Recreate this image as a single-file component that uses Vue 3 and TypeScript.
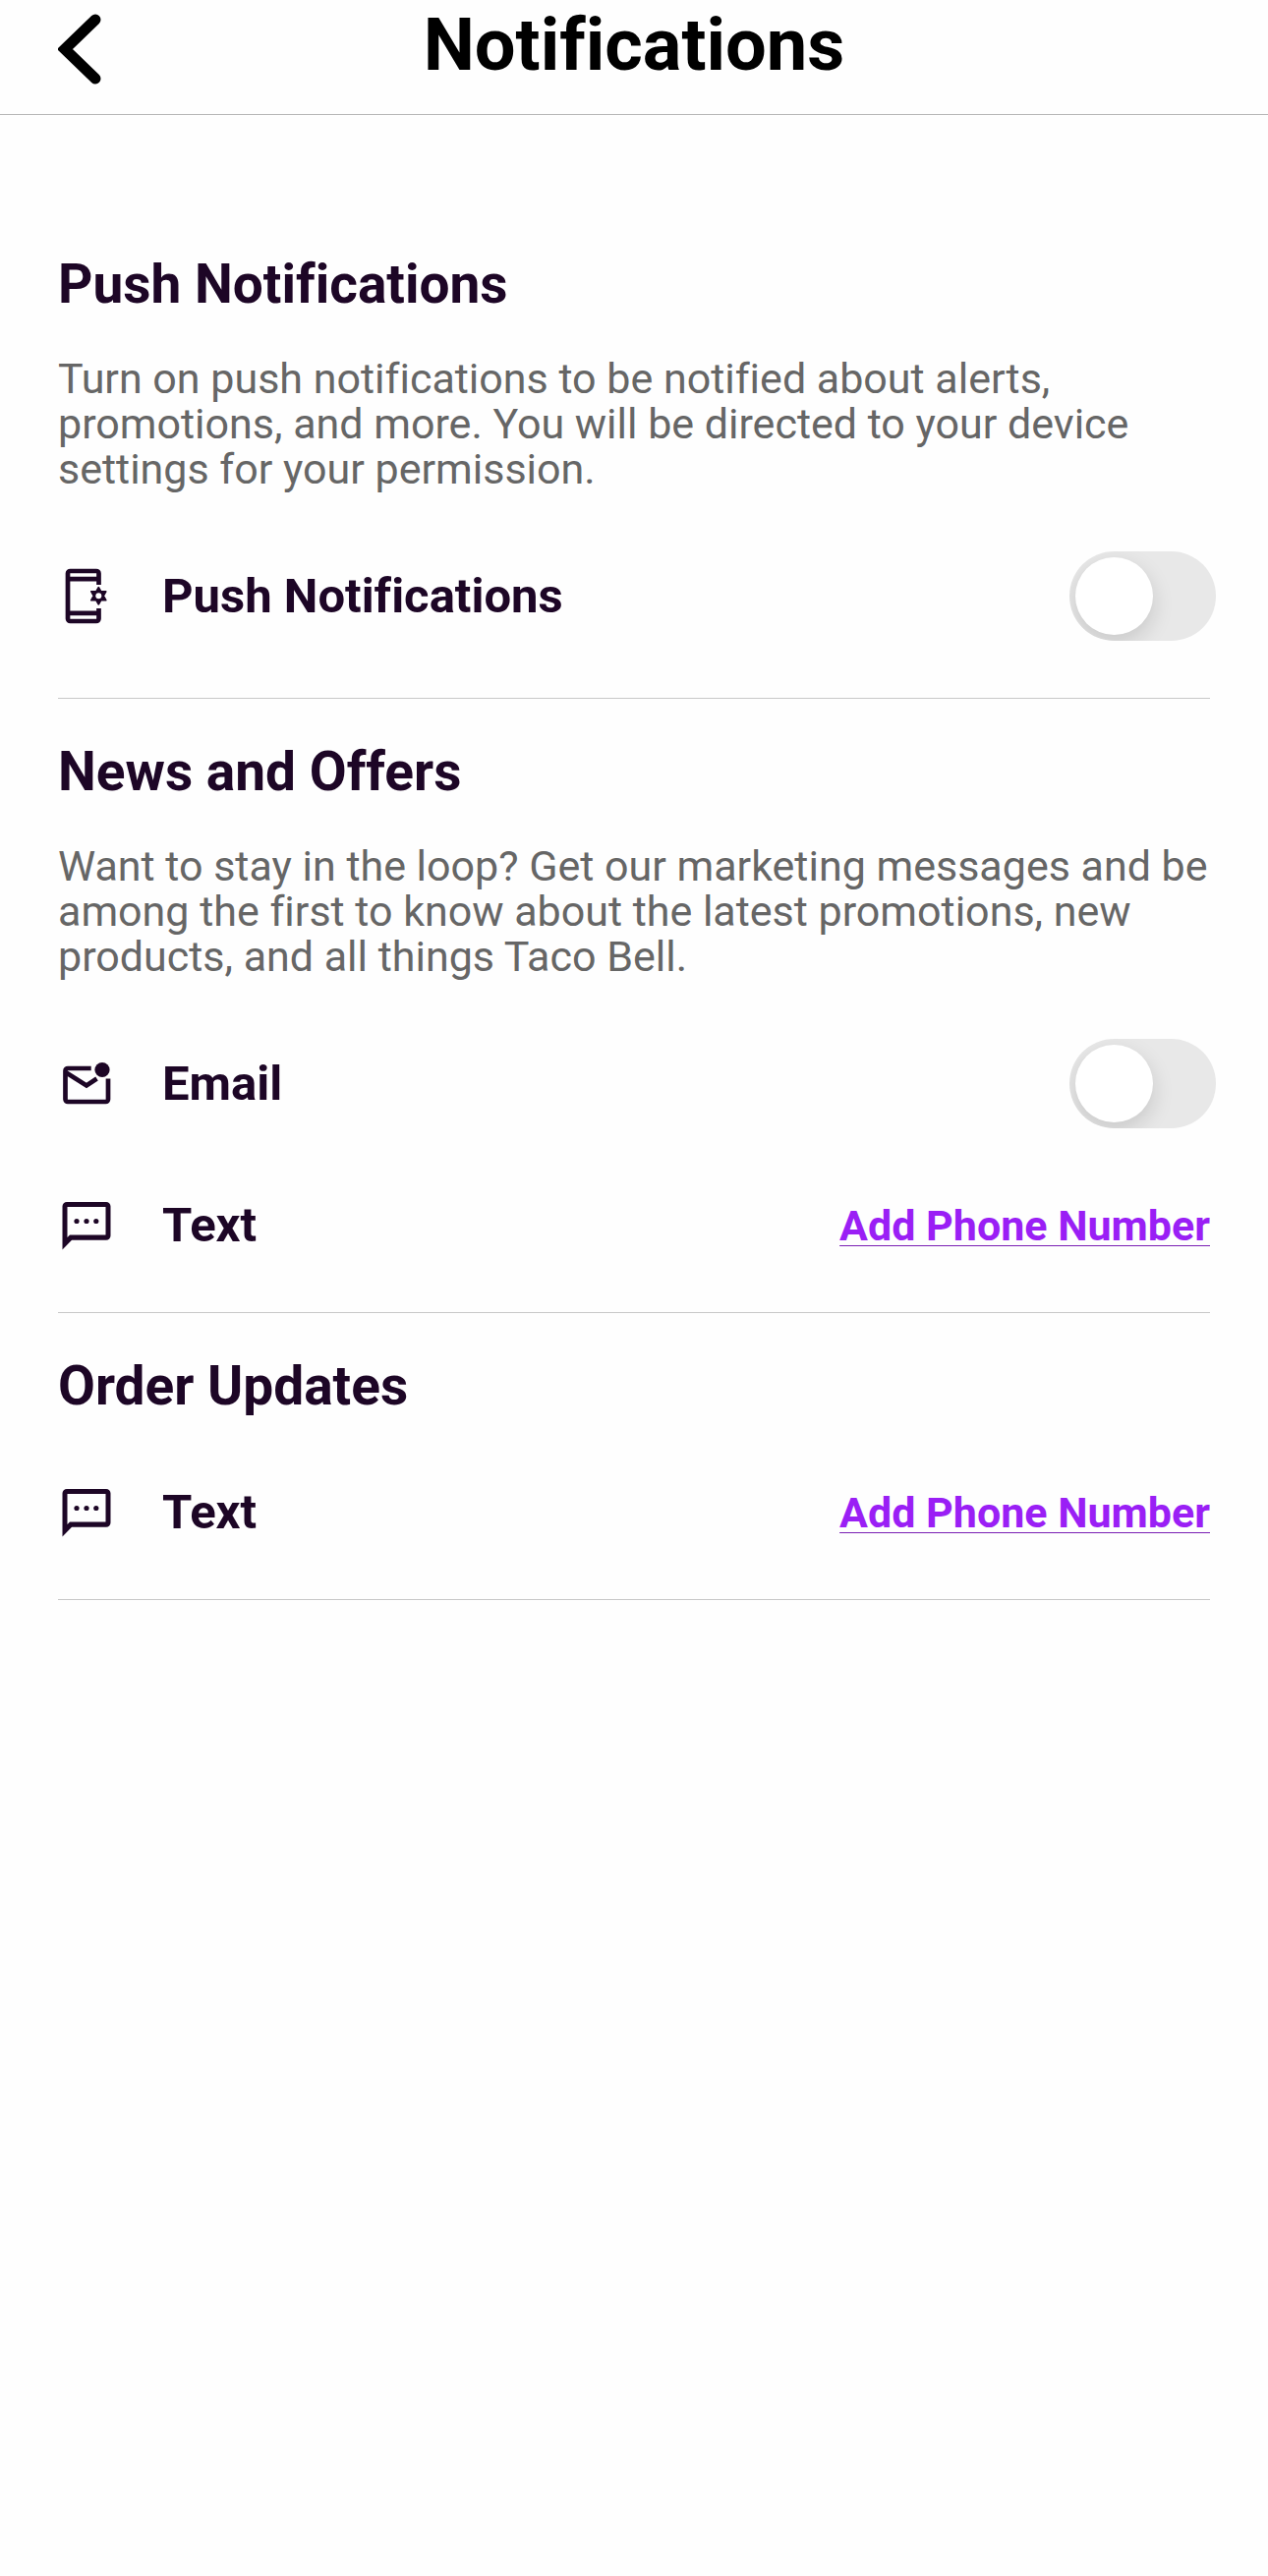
<script setup lang="ts">
import { ref } from 'vue'

type IconName = 'phone' | 'email' | 'text'

interface Channel {
  id: string
  label: string
  icon: IconName
  kind: 'toggle' | 'link'
}

interface Section {
  title: string
  description?: string
  channels: Channel[]
}

const sections: Section[] = [
  {
    title: 'Push Notifications',
    description:
      'Turn on push notifications to be notified about alerts, promotions, and more. You will be directed to your device settings for your permission.',
    channels: [{ id: 'push', label: 'Push Notifications', icon: 'phone', kind: 'toggle' }],
  },
  {
    title: 'News and Offers',
    description:
      'Want to stay in the loop? Get our marketing messages and be among the first to know about the latest promotions, new products, and all things Taco Bell.',
    channels: [
      { id: 'news-email', label: 'Email', icon: 'email', kind: 'toggle' },
      { id: 'news-text', label: 'Text', icon: 'text', kind: 'link' },
    ],
  },
  {
    title: 'Order Updates',
    channels: [{ id: 'order-text', label: 'Text', icon: 'text', kind: 'link' }],
  },
]

const enabled = ref<Record<string, boolean>>({ push: false, 'news-email': false })
</script>

<template>
  <div class="page">
    <header class="header">
      <button class="back" type="button" aria-label="Back">
        <svg width="44" height="72" viewBox="0 0 44 72" fill="none" aria-hidden="true">
          <path d="M38 6 7 36l31 30" stroke="#000" stroke-width="11" stroke-linecap="round" />
        </svg>
      </button>
      <h1 class="title">Notifications</h1>
    </header>

    <main class="content">
      <section v-for="section in sections" :key="section.title" class="section">
        <h2 class="heading">{{ section.title }}</h2>
        <p v-if="section.description" class="description">{{ section.description }}</p>
        <div class="channels" :class="{ compact: !section.description }">
          <div v-for="channel in section.channels" :key="channel.id" class="row">
            <svg class="icon" viewBox="0 0 60 60" fill="none" aria-hidden="true">
              <template v-if="channel.icon === 'phone'">
                <path
                  d="M41.500 18V6.500a2.500 2.500 0 0 0-2.500-2.500H12.500A2.500 2.500 0 0 0 10 6.500v46a2.500 2.500 0 0 0 2.500 2.500H39a2.500 2.500 0 0 0 2.500-2.500V42"
                  stroke="currentColor"
                  stroke-width="4.700"
                />
                <path d="M10 12.200h31M10 46.800h31" stroke="currentColor" stroke-width="4.700" />
                <path
                  d="m41.300 20.800 2.400 4.200 5-.1-2.500 4.400 2.500 4.400-5-.1-2.400 4.200-2.400-4.200-5 .1 2.500-4.400-2.500-4.400 5 .1z"
                  fill="currentColor"
                  stroke="currentColor"
                  stroke-width="1.800"
                  stroke-linejoin="round"
                />
                <circle cx="41.300" cy="29.300" r="3" fill="#fff" />
              </template>
              <template v-else-if="channel.icon === 'email'">
                <path
                  d="M33.700 14H10a2.500 2.500 0 0 0-2.500 2.500v29A2.500 2.500 0 0 0 10 48h38.500a2.500 2.500 0 0 0 2.500-2.500v-21"
                  stroke="currentColor"
                  stroke-width="4.700"
                />
                <path d="m8.500 18.500 20.500 13 10.500-7" stroke="currentColor" stroke-width="4.700" />
                <circle cx="45" cy="15.500" r="7.600" fill="currentColor" />
              </template>
              <template v-else>
                <path
                  fill-rule="evenodd"
                  d="M9 6h40a4.500 4.500 0 0 1 4.500 4.500v29.700a4.500 4.500 0 0 1-4.500 4.500H14l-9.500 9.800v-44A4.500 4.500 0 0 1 9 6zm.5 4.900v31l2.500-2.500h36.500V10.900z"
                  fill="currentColor"
                />
                <g fill="currentColor">
                  <circle cx="19" cy="25.500" r="2.600" />
                  <circle cx="29" cy="25.500" r="2.600" />
                  <circle cx="38.800" cy="25.500" r="2.600" />
                </g>
              </template>
            </svg>
            <label v-if="channel.kind === 'toggle'" class="label" :for="channel.id">{{ channel.label }}</label>
            <span v-else class="label">{{ channel.label }}</span>
            <input
              v-if="channel.kind === 'toggle'"
              :id="channel.id"
              v-model="enabled[channel.id]"
              class="toggle"
              type="checkbox"
              role="switch"
            />
            <a v-else class="link" href="#">Add Phone Number</a>
          </div>
        </div>
      </section>
    </main>
  </div>
</template>

<style>
body {
  margin: 0;
  background: #fefefe;
}
</style>

<style scoped>
.page {
  min-height: 100vh;
  font-family: Roboto, 'Liberation Sans', sans-serif;
  font-variant-ligatures: none;
  color: #1d0626;
  background: #fefefe;
}

.header {
  display: grid;
  grid-template-columns: 100px 1fr 100px;
  align-items: start;
  padding: 0 59px 25px;
  border-bottom: 1px solid #b8b8b8;
}

.back {
  display: flex;
  width: 44px;
  margin-top: 14px;
  padding: 0;
  border: 0;
  background: none;
  cursor: pointer;
}

.title {
  margin: 0;
  font-size: 74px;
  line-height: 91px;
  font-weight: 700;
  text-align: center;
  color: #000;
}

.content {
  padding: 98px 59px 0;
}

.section {
  padding: 44px 0 58px;
  border-bottom: 1px solid #c8c8c8;
}

.heading {
  margin: 0;
  font-size: 55px;
  line-height: 60px;
  font-weight: 700;
}

.description {
  margin: 43px 0 0;
  font-size: 43px;
  line-height: 46px;
  color: #666;
}

.channels {
  display: flex;
  flex-direction: column;
  gap: 69px;
  margin-top: 61px;
}

.channels.compact {
  margin-top: 69px;
}

.row {
  display: flex;
  align-items: center;
}

.icon {
  flex: none;
  width: 60px;
  height: 60px;
  margin-right: 46px;
}

.label {
  flex: 1;
  font-size: 49px;
  line-height: 60px;
  font-weight: 700;
}

.link {
  font-size: 43px;
  line-height: 46px;
  font-weight: 700;
  color: #9a1ff5;
  text-decoration: underline 1px #7a1fb4;
  text-underline-offset: 5px;
  text-decoration-skip-ink: none;
}

.toggle {
  appearance: none;
  flex: none;
  display: flex;
  box-sizing: border-box;
  width: 149px;
  height: 91px;
  margin: 0 -6px 0 0;
  padding: 6px;
  border-radius: 46px;
  background: #e8e8e8;
  overflow: hidden;
  cursor: pointer;
}

.toggle::before {
  content: '';
  width: 79px;
  height: 79px;
  border-radius: 50%;
  background: #fff;
  box-shadow: 0 8px 22px rgba(0, 0, 0, 0.14);
}

.toggle:checked {
  justify-content: flex-end;
  background: #9a1ff5;
}
</style>
